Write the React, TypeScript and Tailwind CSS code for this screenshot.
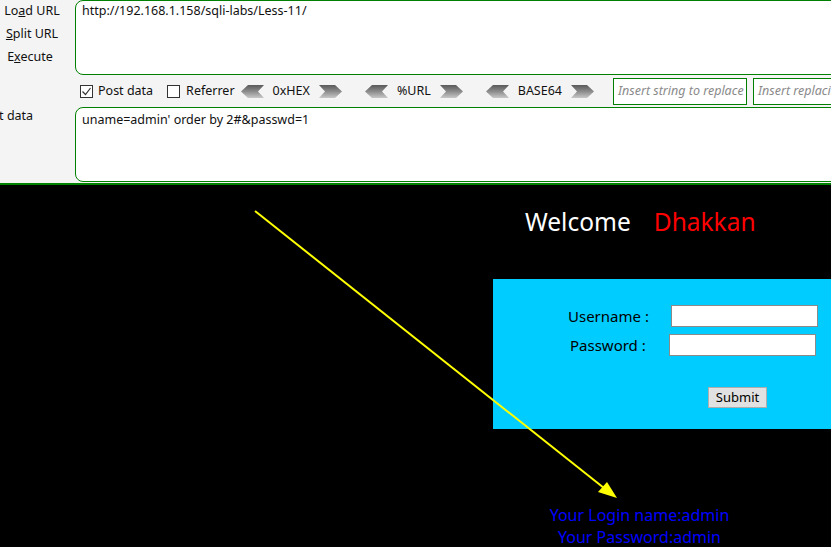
import React from 'react';

const ui = { fontFamily: '"Noto Sans", "Noto Sans CJK SC", sans-serif' };

// gray arrow buttons of the encode bar
const Chevron = ({ dir }: { dir: 'left' | 'right' }) => (
  <svg width="23" height="13" viewBox="0 0 23 13" className="shrink-0">
    <defs>
      <linearGradient id={`g-${dir}`} x1="0" y1="0" x2="0" y2="1">
        <stop offset="0" stopColor="#5a5a5a" />
        <stop offset="0.5" stopColor="#8c8c8c" />
        <stop offset="1" stopColor="#c8c8c8" />
      </linearGradient>
    </defs>
    {dir === 'left' ? (
      <polygon points="0,6.5 7,0 23,0 17,6.5 23,13 7,13" fill={`url(#g-${dir})`} />
    ) : (
      <polygon points="0,0 16,0 23,6.5 16,13 0,13 6,6.5" fill={`url(#g-${dir})`} />
    )}
  </svg>
);

const Check = ({ checked }: { checked?: boolean }) => (
  <span className="w-[13px] h-[13px] shrink-0 border border-[#333] bg-white flex items-center justify-center">
    {checked && (
      <svg width="11" height="11" viewBox="0 0 11 11">
        <path d="M1.5 5.5 L4.5 8.5 L9.5 2" fill="none" stroke="#333" strokeWidth="1.2" />
      </svg>
    )}
  </span>
);

const EncodeBtn = ({ label }: { label: string }) => (
  <div className="flex items-center shrink-0">
    <Chevron dir="left" />
    <span className="px-[9px] whitespace-nowrap">{label}</span>
    <Chevron dir="right" />
  </div>
);

export default function App() {
  return (
    <div className="relative w-[831px] h-[547px] overflow-hidden bg-black" style={ui}>
      {/* HackBar panel */}
      <div className="bg-[#f4f4f4] h-[185px] border-b-2 border-[#008000] text-[12.5px] text-[#111] flex flex-col">
        <div className="flex h-[75px]">
          <div className="w-[75px] shrink-0 flex flex-col">
            <div className="w-[64px] text-center leading-[23px] mt-[-1px]">
              Lo<span className="underline">a</span>d URL
            </div>
            <div className="w-[64px] text-center leading-[23px]">
              <span className="underline">S</span>plit URL
            </div>
            <div className="w-[60px] text-center leading-[24px]">
              E<span className="underline">x</span>ecute
            </div>
          </div>
          <div className="flex-1 -mr-4 bg-white border border-[#008000] rounded-l-[8px] px-[6px] pt-[1px]">
            http://192.168.1.158/sqli-labs/Less-11/
          </div>
        </div>

        <div className="flex items-center h-[32px] pt-[1px] pl-[80px] whitespace-nowrap">
          <Check checked />
          <span className="ml-[5px]">Post data</span>
          <span className="ml-[14px]"><Check /></span>
          <span className="ml-[6px]">Referrer</span>
          <div className="ml-[6px] flex items-center gap-[23px] shrink-0">
            <EncodeBtn label="0xHEX" />
            <EncodeBtn label="%URL" />
            <EncodeBtn label="BASE64" />
          </div>
          <div className="ml-[19px] w-[134px] h-[27px] border border-[#008000] bg-white px-[4px] flex items-center italic text-[#8a8a8a] overflow-hidden shrink-0">
            Insert string to replace
          </div>
          <div className="ml-[6px] w-[120px] h-[27px] border border-[#008000] bg-white px-[4px] flex items-center italic text-[#8a8a8a] overflow-hidden shrink-0">
            Insert replacing string
          </div>
        </div>

        <div className="flex h-[75px]">
          <div className="w-[75px] shrink-0 overflow-hidden">
            <div className="-ml-[22px] whitespace-nowrap">Post data</div>
          </div>
          <div className="flex-1 -mr-4 bg-white border border-[#008000] rounded-l-[8px] px-[6px] pt-[3px]">
            uname=admin' order by 2#&amp;passwd=1
          </div>
        </div>
      </div>

      {/* sqli-labs page */}
      <div className="w-[1280px] flex flex-col">
        <div className="h-[94px] pt-[21px] pl-[525px] text-[24.5px] leading-[32px] flex">
          <span className="text-white">Welcome</span>
          <span className="text-[#ff0000] ml-[23px]">Dhakkan</span>
        </div>
        <div className="ml-[493px] w-[500px] h-[150px] bg-[#00ccff] text-[15px] text-black flex flex-col">
          <div className="flex items-center mt-[26px] h-[22px]">
            <span className="ml-[75px]">Username :</span>
            <span className="ml-[22px] w-[147px] h-[22px] bg-white border border-[#8a8a8a]" />
          </div>
          <div className="flex items-center mt-[7px] h-[22px]">
            <span className="ml-[77px]">Password :</span>
            <span className="ml-[23px] w-[147px] h-[22px] bg-white border border-[#8a8a8a]" />
          </div>
          <div className="mt-[31px] ml-[215px] flex">
            <button className="w-[59px] h-[21px] bg-[#e1e1e1] border border-[#adadad] text-[13px] leading-[19px]">
              Submit
            </button>
          </div>
        </div>
        <div className="mt-[75px] w-[1279px] text-center text-[#0000ff] text-[16px] leading-[22px]">
          <div>Your Login name:admin</div>
          <div>Your Password:admin</div>
        </div>
      </div>

      {/* annotation arrow */}
      <svg className="absolute inset-0 pointer-events-none" width="831" height="547">
        <line x1="255" y1="211" x2="609" y2="492" stroke="#ffff00" strokeWidth="2" />
        <polygon points="617,498 598,492 607,482" fill="#ffff00" />
      </svg>
    </div>
  );
}
